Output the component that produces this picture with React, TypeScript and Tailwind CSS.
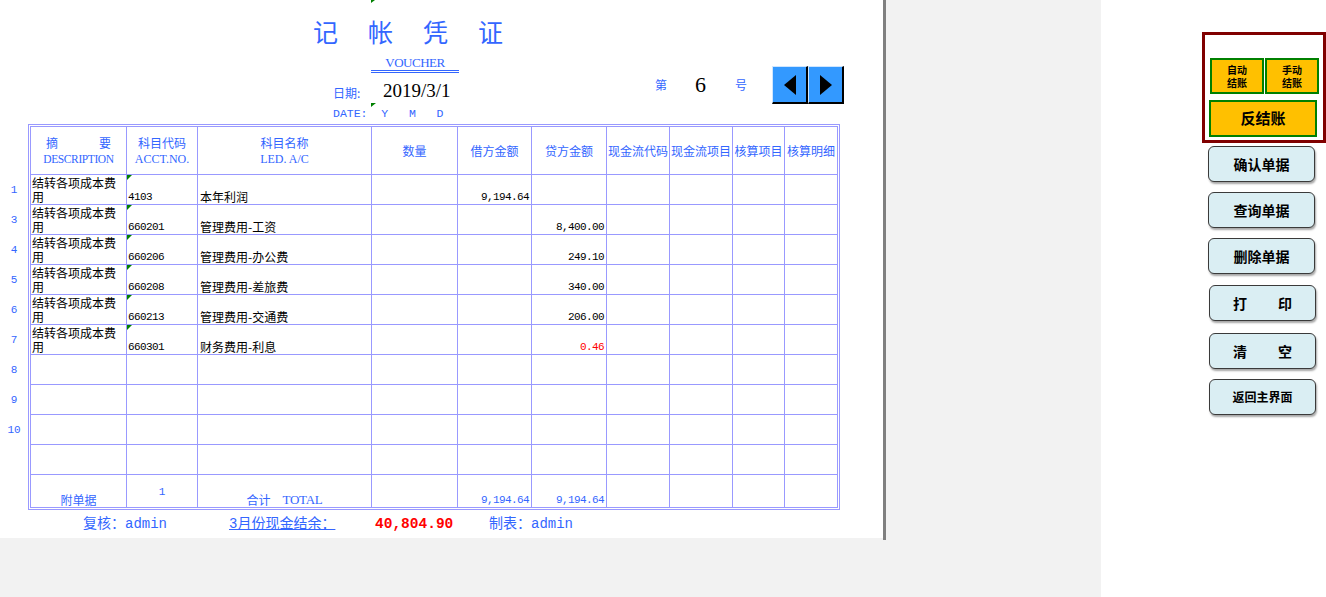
import React from "react";

const MONO = { fontFamily: '"Liberation Mono","Noto Sans CJK SC",monospace' };
const SERIF = { fontFamily: '"Liberation Serif","Noto Sans CJK SC",serif' };

type Row = { n: string; desc?: string; code?: string; name?: string; debit?: string; credit?: string; red?: boolean };

const rows: Row[] = [
  { n: "1", desc: "结转各项成本费用", code: "4103", name: "本年利润", debit: "9,194.64" },
  { n: "3", desc: "结转各项成本费用", code: "660201", name: "管理费用-工资", credit: "8,400.00" },
  { n: "4", desc: "结转各项成本费用", code: "660206", name: "管理费用-办公费", credit: "249.10" },
  { n: "5", desc: "结转各项成本费用", code: "660208", name: "管理费用-差旅费", credit: "340.00" },
  { n: "6", desc: "结转各项成本费用", code: "660213", name: "管理费用-交通费", credit: "206.00" },
  { n: "7", desc: "结转各项成本费用", code: "660301", name: "财务费用-利息", credit: "0.46", red: true },
  { n: "8" },
  { n: "9" },
  { n: "10" },
  { n: "" },
];

const Tick = () => (
  <span className="absolute left-0 top-0 w-0 h-0 border-t-[5px] border-r-[5px] border-t-[#008000] border-r-transparent" />
);

const Cell = ({ children, className = "" }: { children?: React.ReactNode; className?: string }) => (
  <div className={"bg-white relative " + className}>{children}</div>
);

function Table() {
  const hdr = "bg-white flex items-center justify-center text-[12px] leading-[16px] text-[#3366ff]";
  return (
    <div className="border border-[#9999ff] p-px bg-white w-[812px]">
      <div className="grid grid-cols-[95px_70px_173px_85px_73px_74px_62px_62px_51px_52px] grid-rows-[47px_repeat(10,29px)_32px] gap-px p-px bg-[#9999ff]">
        <div className="bg-white flex flex-col justify-center text-[12px] leading-[16px] text-[#3366ff]">
          <div className="flex justify-between px-[15px]">
            <span>摘</span>
            <span>要</span>
          </div>
          <div className="text-center text-[11.5px] tracking-[-0.4px]" style={SERIF}>DESCRIPTION</div>
        </div>
        <div className="bg-white flex flex-col justify-center items-center text-[12px] leading-[16px] text-[#3366ff]">
          <span>科目代码</span>
          <span className="text-[12px]" style={SERIF}>ACCT.NO.</span>
        </div>
        <div className="bg-white flex flex-col justify-center items-center text-[12px] leading-[16px] text-[#3366ff]">
          <span>科目名称</span>
          <span className="text-[12px]" style={SERIF}>LED. A/C</span>
        </div>
        <div className={hdr}>数量</div>
        <div className={hdr}>借方金额</div>
        <div className={hdr}>贷方金额</div>
        <div className={hdr}>现金流代码</div>
        <div className={hdr}>现金流项目</div>
        <div className={hdr}>核算项目</div>
        <div className={hdr}>核算明细</div>

        {rows.map((r, i) => (
          <React.Fragment key={i}>
            <Cell className="pt-[1px] pl-[1px] text-[12px] leading-[14px] text-black">{r.desc}</Cell>
            <Cell className="flex items-end pl-[1px] pb-[1px]">
              {r.code && <Tick />}
              <span className="text-[11px] leading-[12px] tracking-[-0.6px] text-black" style={MONO}>{r.code}</span>
            </Cell>
            <Cell className="flex items-end pl-[2px] text-[12px] leading-[14px] text-black">{r.name}</Cell>
            <Cell />
            <Cell className="flex items-end justify-end pr-[2px] pb-[1px]">
              <span className="text-[11px] leading-[12px] tracking-[-0.6px] text-black" style={MONO}>{r.debit}</span>
            </Cell>
            <Cell className="flex items-end justify-end pr-[2px] pb-[1px]">
              <span className={"text-[11px] leading-[12px] tracking-[-0.6px] " + (r.red ? "text-[#ff0000]" : "text-black")} style={MONO}>{r.credit}</span>
            </Cell>
            <Cell />
            <Cell />
            <Cell />
            <Cell />
          </React.Fragment>
        ))}

        <Cell className="flex items-end justify-center text-[12px] leading-[14px] text-[#3366ff]">附单据</Cell>
        <Cell className="flex items-center justify-center pt-[2px]">
          <span className="text-[11px] leading-[12px] text-[#3366ff]" style={MONO}>1</span>
        </Cell>
        <Cell className="flex items-end justify-center text-[12px] leading-[14px] text-[#3366ff]">
          <span>合计</span>
          <span className="ml-[12px] text-[13px] tracking-[-0.3px]" style={SERIF}>TOTAL</span>
        </Cell>
        <Cell />
        <Cell className="flex items-end justify-end pr-[2px] pb-[1px]">
          <span className="text-[11px] leading-[12px] tracking-[-0.6px] text-[#3366ff]" style={MONO}>9,194.64</span>
        </Cell>
        <Cell className="flex items-end justify-end pr-[2px] pb-[1px]">
          <span className="text-[11px] leading-[12px] tracking-[-0.6px] text-[#3366ff]" style={MONO}>9,194.64</span>
        </Cell>
        <Cell />
        <Cell />
        <Cell />
        <Cell />
      </div>
    </div>
  );
}

const NavBtn = ({ dir }: { dir: "l" | "r" }) => (
  <div className="w-[36px] h-[38px] bg-[#3399ff] border-t border-l border-[#cfe6ff] border-r-2 border-b-2 border-r-black border-b-black flex items-center justify-center">
    <svg width="12" height="20" viewBox="0 0 12 20">
      {dir === "l" ? <polygon points="12,0 12,20 0,10" fill="#000" /> : <polygon points="0,0 0,20 12,10" fill="#000" />}
    </svg>
  </div>
);

function SideBtn({ children, className = "" }: { children: React.ReactNode; className?: string }) {
  return (
    <div
      className={
        "w-[107px] h-[36px] rounded-[6px] border border-[#3a3a3a] bg-[#daeef3] shadow-[1px_2px_2px_rgba(0,0,0,0.35)] flex items-center font-bold text-black " +
        className
      }
    >
      {children}
    </div>
  );
}

export default function App() {
  return (
    <div className="flex w-[1326px] h-[597px] bg-[#f2f2f2] overflow-hidden" style={{ fontFamily: '"Noto Sans CJK SC","Noto Sans",sans-serif' }}>
      <div className="w-[883px] h-[538px] bg-white flex flex-col">
        <div className="relative h-[124px]">
          <span className="absolute left-[371px] top-0 w-0 h-0 border-t-[3px] border-r-[4px] border-t-[#008000] border-r-transparent" />
          <div className="pt-[17px] pl-[313px] text-[25px] leading-[28px] tracking-[30px] text-[#3366ff] whitespace-nowrap">记帐凭证</div>
          <div className="flex mt-[10px]">
            <div className="ml-[333px] w-[322px] flex flex-col">
              <div className="ml-[38px] w-[88px] text-center text-[13px] leading-[15px] tracking-[-0.5px] text-[#3366ff] border-b-[3px] border-double border-[#3366ff]" style={SERIF}>
                VOUCHER
              </div>
              <div className="relative flex items-end mt-[8px] h-[20px]">
                <span className="w-[50px] text-[12px] leading-[16px] text-[#3366ff]">日期:</span>
                <span className="text-[19px] leading-[20px] text-black" style={SERIF}>2019/3/1</span>
                <span className="absolute left-[38px] top-[22px] w-0 h-0 border-t-[4px] border-r-[5px] border-t-[#008000] border-r-transparent" />
              </div>
              <div className="mt-[6px] text-[11.5px] leading-[13px] text-[#3366ff] whitespace-pre" style={MONO}>DATE:  Y   M   D</div>
            </div>
            <div className="flex items-center mt-[11px] h-[38px]">
              <span className="text-[12px] text-[#3366ff] w-[40px]">第</span>
              <span className="text-[22px] leading-[24px] text-black w-[40px]" style={SERIF}>6</span>
              <span className="text-[12px] text-[#3366ff] w-[37px]">号</span>
              <div className="flex">
                <NavBtn dir="l" />
                <NavBtn dir="r" />
              </div>
            </div>
          </div>
        </div>
        <div className="flex">
          <div className="w-[28px] pt-[52px] flex flex-col">
            {rows.map((r, i) => (
              <div key={i} className="h-[30px] pb-[1px] flex items-center justify-center text-[11px] text-[#3366ff]" style={MONO}>
                {r.n}
              </div>
            ))}
          </div>
          <Table />
        </div>
        <div className="flex mt-[4px] h-[20px] items-center text-[14px] leading-[20px] text-[#3366ff] whitespace-nowrap" style={MONO}>
          <span className="ml-[83px] w-[146px]">复核：admin</span>
          <span className="w-[146px]"><span className="underline">3月份现金结余：</span></span>
          <span className="w-[114px] font-bold text-[#ff0000] text-[14.5px]">40,804.90</span>
          <span>制表：admin</span>
        </div>
      </div>
      <div className="w-[3px] h-[540px] bg-[#808080]" />
      <div className="flex-1" />
      <div className="w-[225px] h-[597px] bg-white flex flex-col">
        <div className="mt-[32px] ml-[101px] w-[124px] h-[111px] border-[3px] border-[#800000] pt-[23px] pl-[4px]">
          <div className="flex gap-[1px] ml-[1px]">
            <div className="w-[54px] h-[36px] border-2 border-[#008000] bg-[#ffc000] flex flex-col items-center justify-center text-[10px] leading-[13px] font-bold text-black">
              <span>自动</span>
              <span>结账</span>
            </div>
            <div className="w-[54px] h-[36px] border-2 border-[#008000] bg-[#ffc000] flex flex-col items-center justify-center text-[10px] leading-[13px] font-bold text-black">
              <span>手动</span>
              <span>结账</span>
            </div>
          </div>
          <div className="mt-[6px] w-[108px] h-[37px] border-2 border-[#008000] bg-[#ffc000] flex items-center justify-center text-[15px] font-bold text-black">
            反结账
          </div>
        </div>
        <SideBtn className="mt-[3px] ml-[107px] justify-center text-[14px]">确认单据</SideBtn>
        <SideBtn className="mt-[10px] ml-[107px] justify-center text-[14px]">查询单据</SideBtn>
        <SideBtn className="mt-[10px] ml-[107px] justify-center text-[14px]">删除单据</SideBtn>
        <SideBtn className="mt-[11px] ml-[108px] justify-between px-[23px] text-[14px]">
          <span>打</span>
          <span>印</span>
        </SideBtn>
        <SideBtn className="mt-[12px] ml-[108px] justify-between px-[23px] text-[14px]">
          <span>清</span>
          <span>空</span>
        </SideBtn>
        <SideBtn className="mt-[10px] ml-[108px] justify-center text-[12px]">返回主界面</SideBtn>
      </div>
    </div>
  );
}
